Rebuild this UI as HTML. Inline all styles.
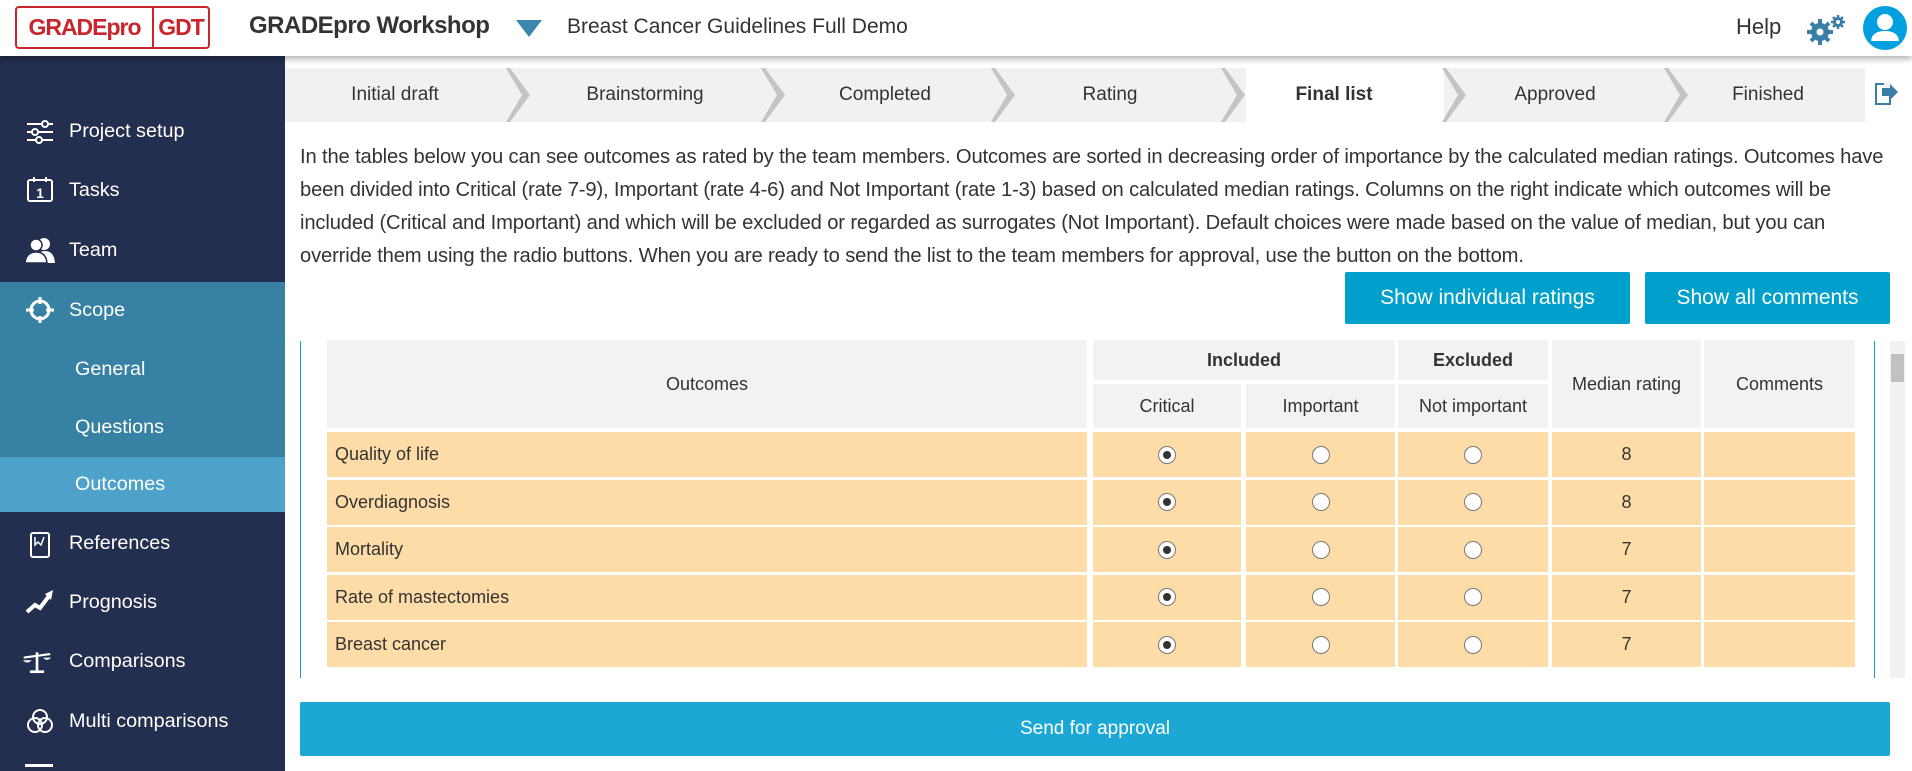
<!DOCTYPE html>
<html><head><meta charset="utf-8"><style>
*{box-sizing:border-box;margin:0;padding:0}
body{width:1912px;height:771px;overflow:hidden;background:#fff;font-family:"Liberation Sans",sans-serif;color:#333;position:relative}
.a{position:absolute}
.hdr{left:0;top:0;width:1912px;height:56px;background:#fff;box-shadow:0 3px 6px rgba(0,0,0,.3);z-index:3}
.side{left:0;top:56px;width:285px;height:715px;background:#242e4f;z-index:2}
.si{position:absolute;left:69px;color:#fff;font-size:19.8px}
.ic{position:absolute;left:25px;width:30px;height:28px}
.step{top:68px;height:54px;background:#f1f1f1;font-size:19px;color:#333;line-height:54px;text-align:center}
.txt{left:300px;font-size:20.2px;color:#333;white-space:nowrap;letter-spacing:-0.15px}
.btn{background:#00a0cc;color:#fff;font-size:21px;text-align:center;line-height:52px;border-radius:2px}
.c{position:absolute;background:#f2f2f2;font-size:18px;color:#333;text-align:center;display:flex;align-items:center;justify-content:center}
.d{background:#fddca8}
.r{width:18px;height:18px;border-radius:50%;border:1px solid #777;background:#fff;position:relative}
.r.on:after{content:"";position:absolute;left:4px;top:4px;width:8px;height:8px;border-radius:50%;background:#333}
</style></head><body>
<div class="a hdr">
  <div class="a" style="left:15px;top:6px;width:195px;height:43px;border:2px solid #c8262c;border-radius:4px;display:flex;">
    <div style="width:137px;border-right:2px solid #c8262c;color:#c8262c;font-weight:bold;font-size:23px;line-height:39px;text-align:center;letter-spacing:-1px">GRADEpro</div>
    <div style="flex:1;color:#c8262c;font-weight:bold;font-size:23px;line-height:39px;text-align:center;letter-spacing:-1px">GDT</div>
  </div>
  <div class="a" style="left:249px;top:12px;font-size:24px;font-weight:bold;color:#333;letter-spacing:-0.5px">GRADEpro Workshop</div>
  <svg class="a" style="left:516px;top:20px" width="26" height="18"><polygon points="0,0 26,0 13,17" fill="#3a87ad"/></svg>
  <div class="a" style="left:567px;top:15px;font-size:21px;color:#333">Breast Cancer Guidelines Full Demo</div>
  <div class="a" style="left:1736px;top:14px;font-size:22px;color:#333">Help</div>
  <svg class="a" style="left:1806px;top:14px" width="42" height="32" viewBox="0 0 42 32"><g fill="#3a7ea8"><circle cx="14" cy="18" r="9"/><g stroke="#3a7ea8" stroke-width="4"><line x1="14" y1="5" x2="14" y2="31"/><line x1="1" y1="18" x2="27" y2="18"/><line x1="5" y1="9" x2="23" y2="27"/><line x1="23" y1="9" x2="5" y2="27"/></g><circle cx="14" cy="18" r="3.5" fill="#fff"/><circle cx="32" cy="8" r="5"/><g stroke="#3a7ea8" stroke-width="2.5"><line x1="32" y1="1" x2="32" y2="15"/><line x1="25" y1="8" x2="39" y2="8"/><line x1="27" y1="3" x2="37" y2="13"/><line x1="37" y1="3" x2="27" y2="13"/></g><circle cx="32" cy="8" r="2" fill="#fff"/></g></svg>
  <svg class="a" style="left:1862px;top:5px" width="46" height="46" viewBox="0 0 46 46"><circle cx="23" cy="23" r="22" fill="#00a0e0"/><circle cx="23" cy="17" r="8" fill="#fff"/><path d="M9 36 Q10 26 23 26 Q36 26 37 36 Z" fill="#fff"/></svg>
</div>

<div class="a side">
  <div class="a" style="left:0;top:226px;width:285px;height:175px;background:#3781a4"></div>
  <div class="a" style="left:0;top:401px;width:285px;height:55px;background:#4ea1c8"></div>
  <svg class="ic" style="top:62px" viewBox="0 0 30 28"><g stroke="#fff" stroke-width="2" fill="none"><line x1="2" y1="6" x2="28" y2="6"/><line x1="2" y1="14" x2="28" y2="14"/><line x1="2" y1="22" x2="28" y2="22"/><circle cx="20" cy="6" r="3" fill="#242e4f"/><circle cx="10" cy="14" r="3" fill="#242e4f"/><circle cx="14" cy="22" r="3" fill="#242e4f"/></g></svg>
  <div class="si" style="top:64px">Project setup</div>
  <svg class="ic" style="top:120px" viewBox="0 0 30 28"><rect x="3" y="4" width="24" height="21" rx="2" stroke="#fff" stroke-width="2" fill="none"/><line x1="9" y1="1" x2="9" y2="6" stroke="#fff" stroke-width="2"/><line x1="21" y1="1" x2="21" y2="6" stroke="#fff" stroke-width="2"/><text x="15" y="22" fill="#fff" font-size="14" font-weight="bold" text-anchor="middle" font-family="Liberation Sans">1</text></svg>
  <div class="si" style="top:123px">Tasks</div>
  <svg class="ic" style="top:180px" viewBox="0 0 30 28"><circle cx="19" cy="8" r="6" fill="#fff"/><path d="M10 27 Q11 15 20 15 Q29 15 30 27Z" fill="#fff"/><circle cx="11" cy="9" r="6" fill="#fff" stroke="#242e4f" stroke-width="1.5"/><path d="M0 27 Q1 16 11 16 Q21 16 22 27Z" fill="#fff" stroke="#242e4f" stroke-width="1.5"/></svg>
  <div class="si" style="top:183px">Team</div>
  <svg class="ic" style="top:240px" viewBox="0 0 30 28"><circle cx="15" cy="14" r="9" stroke="#fff" stroke-width="3" fill="none"/><g stroke="#fff" stroke-width="3"><line x1="15" y1="1" x2="15" y2="8"/><line x1="15" y1="20" x2="15" y2="27"/><line x1="1" y1="14" x2="9" y2="14"/><line x1="21" y1="14" x2="29" y2="14"/></g></svg>
  <div class="si" style="top:243px">Scope</div>
  <div class="si" style="left:75px;top:302px">General</div>
  <div class="si" style="left:75px;top:360px">Questions</div>
  <div class="si" style="left:75px;top:417px">Outcomes</div>
  <svg class="ic" style="top:475px" viewBox="0 0 30 28"><rect x="6" y="2" width="18" height="24" rx="2" stroke="#fff" stroke-width="2" fill="none"/><path d="M10 6 V14 L13 11 L16 14 L19 6" stroke="#fff" stroke-width="1.5" fill="none"/></svg>
  <div class="si" style="top:476px">References</div>
  <svg class="ic" style="top:532px" viewBox="0 0 30 28"><path d="M2 24 L10 17 L15 20 L24 8" stroke="#fff" stroke-width="4" fill="none"/><polygon points="20,6 28,2 26,12" fill="#fff"/></svg>
  <div class="si" style="top:535px">Prognosis</div>
  <svg class="ic" style="top:592px;left:22px" viewBox="0 0 34 28"><line x1="17" y1="3" x2="17" y2="25" stroke="#fff" stroke-width="3"/><line x1="9" y1="25" x2="25" y2="25" stroke="#fff" stroke-width="3"/><line x1="2" y1="9" x2="32" y2="5" stroke="#fff" stroke-width="2.5"/><path d="M1 12 H11 Q6 17 1 12Z" fill="#fff"/><path d="M24 9 H33 Q28 14 24 9Z" fill="#fff"/></svg>
  <div class="si" style="top:594px">Comparisons</div>
  <svg class="ic" style="top:652px" viewBox="0 0 30 28"><g stroke="#fff" stroke-width="2" fill="none"><circle cx="15" cy="9" r="7"/><circle cx="10" cy="17" r="7"/><circle cx="20" cy="17" r="7"/></g></svg>
  <div class="si" style="top:654px">Multi comparisons</div>
  <div class="a" style="left:25px;top:708px;width:28px;height:3px;background:#fff"></div>
</div>

<div class="a step" style="left:285px;width:1580px"></div>
<div class="a" style="left:1246px;top:68px;width:198px;height:54px;background:#fff"></div>
<div class="a step" style="left:335px;width:120px;background:none">Initial draft</div>
<div class="a step" style="left:570px;width:150px;background:none">Brainstorming</div>
<div class="a step" style="left:820px;width:130px;background:none">Completed</div>
<div class="a step" style="left:1050px;width:120px;background:none">Rating</div>
<div class="a step" style="left:1274px;width:120px;background:none;font-weight:bold">Final list</div>
<div class="a step" style="left:1495px;width:120px;background:none">Approved</div>
<div class="a step" style="left:1708px;width:120px;background:none">Finished</div>
<svg class="a" style="left:0;top:68px" width="1912" height="56"><g fill="#c4c4c4">
<polygon points="506,0 510,0 530,27 510,54 506,54 522,27"/><polygon points="761,0 765,0 785,27 765,54 761,54 777,27"/><polygon points="991,0 995,0 1015,27 995,54 991,54 1007,27"/><polygon points="1221,0 1225,0 1245,27 1225,54 1221,54 1237,27"/><polygon points="1442,0 1446,0 1466,27 1446,54 1442,54 1458,27"/><polygon points="1664,0 1668,0 1688,27 1668,54 1664,54 1680,27"/></g>
<rect x="1876" y="16" width="14" height="20" fill="none" stroke="#3a7ea8" stroke-width="2"/><rect x="1884" y="14" width="8" height="12" fill="#f1f1f1"/><polygon points="1882,20 1890,20 1890,16 1898,24 1890,32 1890,28 1882,28" fill="#3a7ea8"/></svg>

<div class="a txt" style="top:146px">In the tables below you can see outcomes as rated by the team members. Outcomes are sorted in decreasing order of importance by the calculated median ratings. Outcomes have</div>
<div class="a txt" style="top:179px">been divided into Critical (rate 7-9), Important (rate 4-6) and Not Important (rate 1-3) based on calculated median ratings. Columns on the right indicate which outcomes will be</div>
<div class="a txt" style="top:212px">included (Critical and Important) and which will be excluded or regarded as surrogates (Not Important). Default choices were made based on the value of median, but you can</div>
<div class="a txt" style="top:245px">override them using the radio buttons. When you are ready to send the list to the team members for approval, use the button on the bottom.</div>

<div class="a btn" style="left:1345px;top:272px;width:285px;height:52px">Show individual ratings</div>
<div class="a btn" style="left:1645px;top:272px;width:245px;height:52px">Show all comments</div>

<div class="a" style="left:300px;top:341px;width:1px;height:337px;background:#1a9bd0"></div>
<div class="a" style="left:1874px;top:341px;width:1px;height:337px;background:#1a9bd0"></div>
<div class="a" style="left:1890px;top:341px;width:15px;height:337px;background:#f1f1f1"></div>
<div class="a" style="left:1891px;top:354px;width:13px;height:28px;background:#c1c1c1"></div>

<div class="c" style="left:327px;top:340px;width:760px;height:88px">Outcomes</div>
<div class="c" style="left:1093px;top:340px;width:302px;height:40px;font-weight:bold">Included</div>
<div class="c" style="left:1398px;top:340px;width:150px;height:40px;font-weight:bold">Excluded</div>
<div class="c" style="left:1093px;top:384px;width:148px;height:44px">Critical</div>
<div class="c" style="left:1246px;top:384px;width:149px;height:44px">Important</div>
<div class="c" style="left:1398px;top:384px;width:150px;height:44px">Not important</div>
<div class="c" style="left:1552px;top:340px;width:149px;height:88px">Median rating</div>
<div class="c" style="left:1704px;top:340px;width:151px;height:88px">Comments</div>

<div id="rows"></div>
<script>
var names=["Quality of life","Overdiagnosis","Mortality","Rate of mastectomies","Breast cancer"],med=["8","8","7","7","7"];
var h="";for(var i=0;i<5;i++){var t=432+i*47.5;
h+='<div class="c d" style="left:327px;top:'+t+'px;width:760px;height:45px;justify-content:flex-start;padding-left:8px">'+names[i]+'</div>';
h+='<div class="c d" style="left:1093px;top:'+t+'px;width:148px;height:45px"><div class="r on"></div></div>';
h+='<div class="c d" style="left:1246px;top:'+t+'px;width:149px;height:45px"><div class="r"></div></div>';
h+='<div class="c d" style="left:1398px;top:'+t+'px;width:150px;height:45px"><div class="r"></div></div>';
h+='<div class="c d" style="left:1552px;top:'+t+'px;width:149px;height:45px">'+med[i]+'</div>';
h+='<div class="c d" style="left:1704px;top:'+t+'px;width:151px;height:45px"></div>';}
document.getElementById("rows").innerHTML=h;
</script>

<div class="a" style="left:300px;top:702px;width:1590px;height:54px;background:#1ca8d4;color:#fff;font-size:19px;text-align:center;line-height:54px;border-radius:2px">Send for approval</div>
</body></html>
